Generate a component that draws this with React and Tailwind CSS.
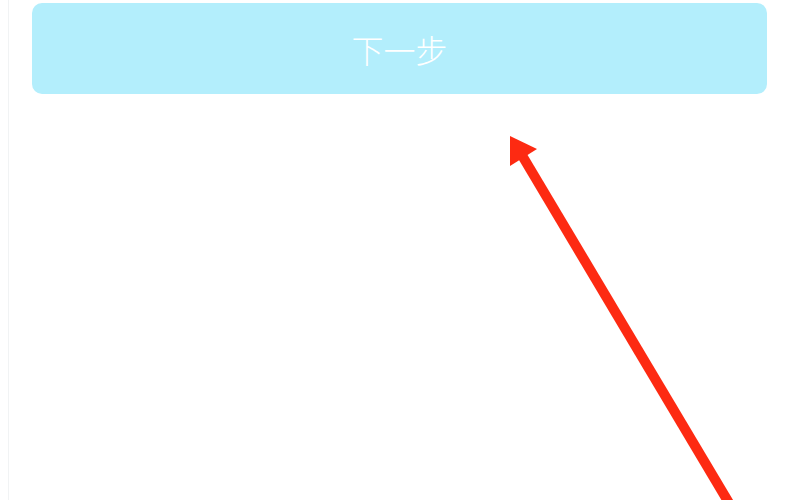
export default function App() {
  return (
    <div className="relative h-[500px] w-[800px] overflow-hidden bg-white" style={{ fontFamily: '"Noto Sans CJK SC", "Noto Sans", sans-serif' }}>
      <div className="flex h-full border-l border-[#f1f3f4] ml-[8px] flex-col pl-[23px] pr-[33px] pt-[3px]">
        <button className="flex h-[91px] w-full items-center justify-center rounded-[10px] bg-[#b3eefc] text-[32px] font-light text-white">
          下一步
        </button>
      </div>

      {/* red pointer arrow */}
      <svg className="pointer-events-none absolute left-0 top-0" width="800" height="500" viewBox="0 0 800 500">
        <line x1="520" y1="152" x2="732" y2="508" stroke="#fd2a12" strokeWidth="10" />
        <polygon points="510,136 537,149 510,166" fill="#fd2a12" />
      </svg>
    </div>
  );
}
